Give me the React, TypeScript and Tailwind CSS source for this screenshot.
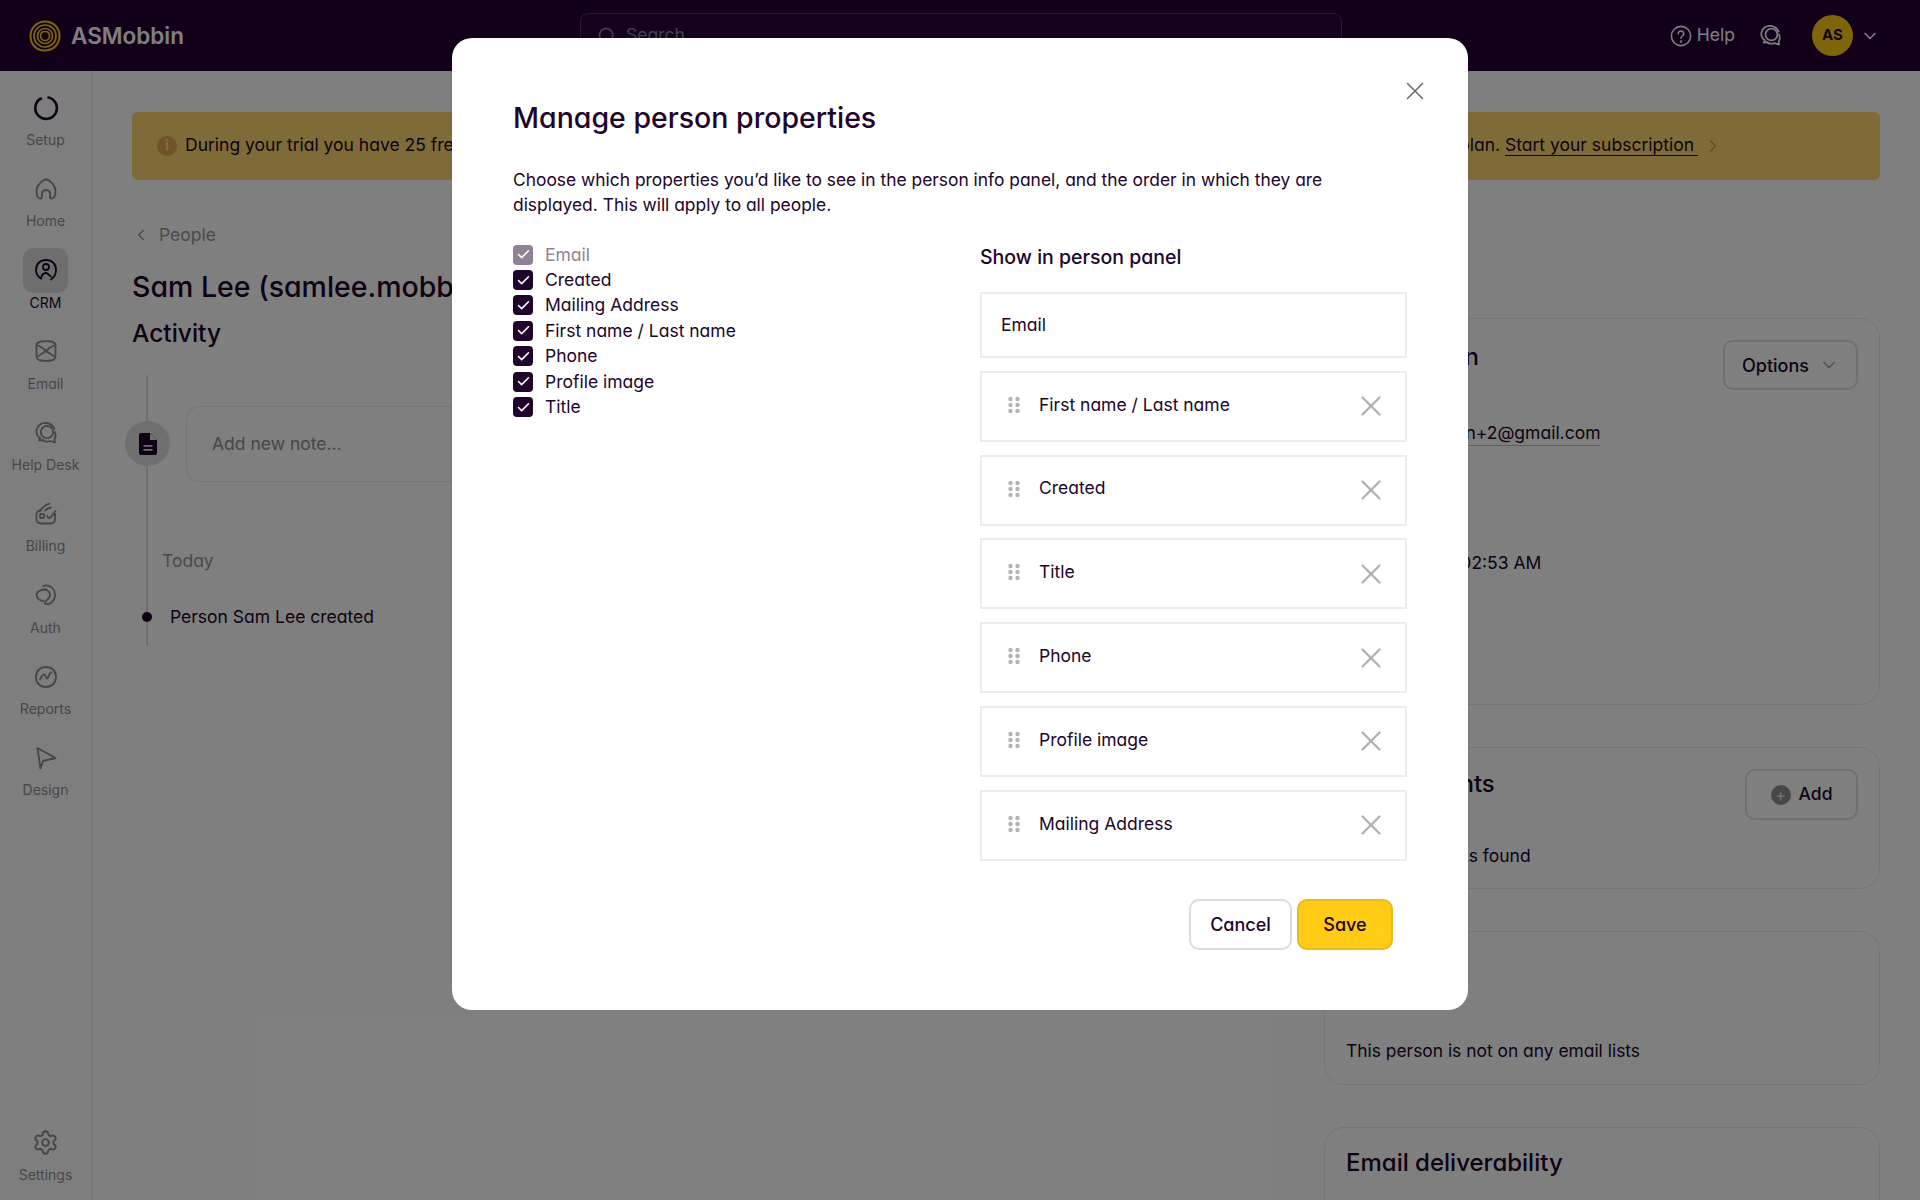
import React from "react";
import { Settings, ChevronDown, ChevronLeft, ChevronRight, X, Search, Check } from "lucide-react";

const S = ({ children, size = 24, className = "" }: { children: React.ReactNode; size?: number; className?: string }) => (
  <svg width={size} height={size} viewBox="0 0 24 24" fill="none" stroke="currentColor" strokeWidth={1.8} strokeLinecap="round" strokeLinejoin="round" className={className}>
    {children}
  </svg>
);

const Bubbles = ({ size = 24 }: { size?: number }) => (
  <S size={size}>
    <path d="M6 17C3 15 2 12 2.500 9 3.500 4 8 1.500 12.500 2c3.500.5 6.500 2.500 8 6" />
    <circle cx="13" cy="11" r="6.200" />
    <path d="M21 11c1 3 .5 6-.5 8l.5 2.500-5-1.500c-3 1-6 .5-8-1" />
    <path d="M6 17l-1 2.500 4-.5" />
  </S>
);

const icons: Record<string, React.ReactNode> = {
  Home: <S><path d="M12 2.500C9 2.500 2.500 8 2.500 14c0 5 1.500 7.500 4 7.500s1-3.500 1.500-5.500c.5-2 2-3 4-3s3.500 1 4 3c.5 2-1 5.500 1.500 5.500s4-2.500 4-7.500c0-6-6.500-11.500-9.500-11.500z" /></S>,
  CRM: <S><path d="M7 20.500C3.500 18.500 2 15.500 2 12 2 6 6 2 12 2s10 4 10 10c0 4-2 7.500-5 9.500" /><circle cx="12" cy="9" r="3" /><path d="M7 20.500c.5-3 2.500-5.500 5-5.500s3 3 5 3.500" /></S>,
  Email: <S><path d="M7 2.500c3-.5 7-.5 10 0 3 .5 4.500 2 4.500 4.500v10c0 3-1.500 4-4.500 4.500-3 .5-7 .5-10 0-3-.5-4.500-1.500-4.500-4.500V7c0-2.500 1.500-4 4.500-4.500z" /><path d="M4 6.500c3 1 5.500 3 8 5.500 2.500-2.500 5-4.500 8-5.500M4.500 17c2.500-2 5-3 7.500-5 2.500 2 5 3 7.500 5" /></S>,
  "Help Desk": <Bubbles />,
  Billing: <S><path d="M7 8.500c-3 0-4.500 1.500-4.500 4.500v4c0 3 2 4.500 5 4.500h9c3 0 4.500-1.500 4.500-4.500v-5" /><path d="M6.500 8c2-3 5-5 9-6.500M11 8.500c1.500-1.500 3.500-2.500 6-3" /><circle cx="8" cy="14" r="2.200" /><path d="M13 14c1 2.500 2.500 2.500 4 1 1.500-1.500 3-4 4.500-6" /></S>,
  Auth: <S><path d="M9 3c6-2 12 2 12 9 0 6-5 10-9 9-2-.5-1-3 1-4 2-1.500 3-3 3-5 0-3-3-5.500-5-5.500" /><path d="M11 6.500c-4 0-8.500 2-8.500 5.500 0 3 3.500 6 7 6" /></S>,
  Reports: <S><path d="M12 2c6 0 10 4 10 10s-4 10-10 10S2 18 2 12 6 2 12 2z" /><path d="M6 14.500c1.500-3 3-5.500 4.500-5 1.500.5 1 4 2.500 4 1.500 0 2-6 4.500-6" /></S>,
  Design: <S><path d="M3.500 2l18 10-12.500 3-2.500 7.500z" /></S>,
};

const NavItem = ({ label, active }: { label: string; active?: boolean }) => (
  <div className="flex flex-col items-center">
    <div className={`flex h-[45px] w-[45px] items-center justify-center rounded-[10px] ${active ? "bg-[#dedcdf] text-[#21042b]" : "text-[#8b8a8e]"}`}>
      {icons[label]}
    </div>
    <span className={`text-[14px] leading-[20px] ${active ? "text-[#21042b]" : "text-[#8f8e92]"}`}>{label}</span>
  </div>
);

const Logo = () => (
  <svg width="32" height="32" viewBox="0 0 32 32" fill="none" stroke="#ffcb14" strokeWidth="1.700">
    <path d="M16 1.500c8 0 14.500 6 14.500 14.500S24 30.500 15.500 30.500 1.500 24 1.500 16 8 1.500 16 1.500z" strokeWidth="2" />
    <path d="M16 5c6 0 11 4.500 11 11s-5 11-11 11S5 22 5 16 10 5 16 5z" />
    <path d="M16 8.500c4.500 0 7.500 3.500 7.500 7.500s-3 7.500-7.500 7.500S8.500 20 8.500 16 11.500 8.500 16 8.500z" />
    <path d="M16 11.500c3 0 4.500 2 4.500 4.500s-2 4.500-4.500 4.500-4.500-2-4.500-4.500 1.500-4.500 4.500-4.500z" />
  </svg>
);

const Card = ({ className, children }: { className: string; children?: React.ReactNode }) => (
  <div className={`rounded-[20px] border-[1.5px] border-[#ebebeb] px-[21px] ${className}`}>{children}</div>
);

const checks = ["Created", "Mailing Address", "First name / Last name", "Phone", "Profile image", "Title"];
const rows = ["First name / Last name", "Created", "Title", "Phone", "Profile image", "Mailing Address"];

const Dots = () => (
  <svg width="12" height="18" viewBox="0 0 12 18" fill="#b4b4b4" className="shrink-0">
    {[3, 9, 15].map((y) => (
      <React.Fragment key={y}>
        <circle cx="2.500" cy={y} r="2.200" />
        <circle cx="9.500" cy={y} r="2.200" />
      </React.Fragment>
    ))}
  </svg>
);

export default function App() {
  return (
    <div className="relative h-[1200px] w-[1920px] overflow-hidden bg-white font-['Inter','Liberation_Sans',sans-serif] text-[#21042b] [font-feature-settings:'cv11']">
      <header className="flex h-[71px] items-center bg-[#240034] pl-[29px] pr-[40px]">
        <Logo />
        <span className="ml-[10px] text-[22.500px] font-semibold text-white">ASMobbin</span>
        <div className="ml-[396px] flex h-[46px] w-[762px] items-center gap-[9px] rounded-[8px] border border-[#4a3453] bg-[#2b053c] pl-[16px] text-[#8f7f99]">
          <Search size={20} />
          <span className="text-[17.500px]">Search</span>
        </div>
        <div className="ml-auto flex items-center text-white">
          <svg width="22" height="22" viewBox="0 0 24 24" fill="none" stroke="currentColor" strokeWidth="1.700" strokeLinecap="round">
            <circle cx="12" cy="12" r="10.500" />
            <path d="M9 9.500c0-4 6-4 6 0 0 2.500-3 2.500-3 5" />
            <circle cx="12" cy="18" r=".5" />
          </svg>
          <span className="ml-[5px] text-[17.500px]">Help</span>
          <span className="ml-[24px]"><Bubbles size={23} /></span>
          <div className="ml-[30px] flex h-[41px] w-[41px] items-center justify-center rounded-full bg-[#ffcb14] text-[15px] font-bold text-[#21042b]">AS</div>
          <ChevronDown size={20} className="ml-[7px]" />
        </div>
      </header>

      <div className="flex h-[1129px]">
        <aside className="flex w-[93px] shrink-0 flex-col border-r-2 border-[#eeeeee] bg-[#fdfdfd] pb-[15px] pt-[14px]">
          <div className="flex flex-col gap-[16.300px]">
            <div className="flex flex-col items-center">
              <div className="flex h-[45px] w-[45px] items-center justify-center text-[#21042b]">
                <svg width="26" height="26" viewBox="0 0 26 26" fill="none" stroke="currentColor" strokeWidth="2.600" strokeLinecap="round">
                  <path d="M15.500 2.500A10.800 10.800 0 1 1 8 3.500" />
                </svg>
              </div>
              <span className="text-[14px] leading-[20px] text-[#8f8e92]">Setup</span>
            </div>
            <NavItem label="Home" />
            <NavItem label="CRM" active />
            <NavItem label="Email" />
            <NavItem label="Help Desk" />
            <NavItem label="Billing" />
            <NavItem label="Auth" />
            <NavItem label="Reports" />
            <NavItem label="Design" />
          </div>
          <div className="mt-auto flex flex-col items-center">
            <div className="flex h-[45px] items-center justify-center text-[#8b8a8e]"><Settings size={27} strokeWidth={1.700} /></div>
            <span className="text-[14px] leading-[20px] text-[#8f8e92]">Settings</span>
          </div>
        </aside>

        <main className="min-w-0 flex-1 pl-[39px] pr-[40px] pt-[41px]">
          <div className="flex h-[68px] items-center justify-between rounded-[6px] bg-[#ffd66f] pb-[1px] pl-[25px] pr-[157px] text-[17.500px]">
            <div className="flex w-[300px] items-center gap-[8px] whitespace-nowrap">
              <div className="flex h-[20px] w-[20px] shrink-0 items-center justify-center rounded-full bg-[#e0a84e] text-[13px] font-bold leading-none text-[#ffe2a0]">i</div>
              <span>During your trial you have 25 free</span>
            </div>
            <div className="flex items-center">
              <span>plan. <span className="border-b border-[#21042b] pr-[4px]">Start your subscription</span></span>
              <ChevronRight size={20} className="ml-[5px] text-[#c79a4c]" />
            </div>
          </div>

          <div className="mt-[43px] flex gap-[40px]">
            <div className="w-[1152px] shrink-0">
              <div className="flex items-center text-[17.500px] leading-[24px] text-[#959398]">
                <ChevronLeft size={18} />
                <span className="ml-[9px]">People</span>
              </div>
              <h1 className="mt-[20px] whitespace-nowrap text-[28.500px] font-medium leading-[40px]">Sam Lee (samlee.mobb</h1>
              <h2 className="mt-[8px] text-[24.500px] font-medium leading-[36px]">Activity</h2>
              <div className="relative ml-[14px] mt-[24px] h-[271px] border-l-2 border-[#dedede] pl-[38px] pt-[31px]">
                <div className="absolute -left-[23px] top-[46px] flex h-[45px] w-[45px] items-center justify-center rounded-full bg-[#dedede]">
                  <svg width="18" height="22" viewBox="0 0 18 22" fill="#21042b">
                    <path d="M2 0h9l7 7v13a2 2 0 0 1-2 2H2a2 2 0 0 1-2-2V2a2 2 0 0 1 2-2z" />
                    <path d="M11 0v7h7z" fill="#dedede" />
                    <path d="M4.500 12h9v1.800h-9zM4.500 16h9v1.800h-9z" fill="#dedede" />
                  </svg>
                </div>
                <div className="flex h-[76px] w-[282px] items-center rounded-l-[14px] border-[1.500px] border-r-0 border-[#ebebeb] pl-[25px] text-[17.500px] text-[#8f8e92]">Add new note...</div>
                <div className="-ml-[24px] mt-[67px] text-[17.500px] leading-[24px] text-[#959398]">Today</div>
                <div className="relative -ml-[16px] mt-[32px] text-[17.500px] leading-[24px]">
                  <span className="absolute -left-[28px] top-[7px] h-[10px] w-[10px] rounded-full bg-[#21042b]" />
                  Person Sam Lee created
                </div>
              </div>
            </div>

            <div className="w-[556px] shrink-0 pt-[95px]">
              <Card className="relative h-[387px]">
                <div className="mt-[22px] text-[24px] font-medium leading-[32px]">Information</div>
                <div className="absolute right-[21px] top-[21px] flex h-[50px] w-[135px] items-center justify-center gap-[10px] rounded-[10px] border-2 border-[#dedede] text-[18px] font-medium">
                  Options <ChevronDown size={20} className="text-[#a5a5a5]" />
                </div>
                <div className="ml-[3px] mt-[48px] w-fit border-b border-[#bdbdbd] text-[17.500px] leading-[24px]">samlee.mobbin+2@gmail.com</div>
                <div className="ml-[7px] mt-[105px] text-[17.500px] leading-[24px]">February 18, 02:53 AM</div>
              </Card>
              <Card className="relative mt-[42px] h-[142px]">
                <div className="ml-[3px] mt-[20px] text-[24px] font-medium leading-[32px]">Attachments</div>
                <div className="absolute right-[21px] top-[21px] flex h-[51px] w-[113px] items-center justify-center gap-[8px] rounded-[10px] border-2 border-[#dedede] text-[17.500px] font-medium">
                  <span className="flex h-[20px] w-[20px] items-center justify-center rounded-full bg-[#8f8e92] text-[16px] leading-none text-[#dedede]">+</span>
                  Add
                </div>
                <div className="mt-[44px] text-[17.500px] leading-[24px]">No attachments found</div>
              </Card>
              <Card className="mt-[42px] h-[154px]">
                <div className="mt-[20px] text-[24px] font-medium leading-[32px]">Email lists</div>
                <div className="mt-[55px] text-[17.400px] leading-[24px]">This person is not on any email lists</div>
              </Card>
              <Card className="mt-[42px] h-[120px]">
                <div className="mt-[19px] text-[24px] font-medium leading-[32px]">Email deliverability</div>
              </Card>
            </div>
          </div>
        </main>
      </div>

      <div className="absolute inset-0 bg-black/50" />

      <div className="absolute left-[452px] top-[38px] h-[972px] w-[1016px] rounded-[20px] bg-white px-[61px] pb-[60px] pt-[62px]">
        <X size={30} strokeWidth={1.300} className="absolute right-[38px] top-[38px] text-[#6f6a73]" />
        <h2 className="text-[28.500px] font-medium leading-[36px]">Manage person properties</h2>
        <p className="mt-[31px] text-[17.400px] leading-[25px]">
          Choose which properties you’d like to see in the person info panel, and the order in which they are
          <br />
          displayed. This will apply to all people.
        </p>
        <div className="mt-[25px] flex">
          <div className="w-[467px] shrink-0">
            <label className="flex h-[25.400px] items-center gap-[12px] text-[17.500px] text-[#908397]">
              <span className="flex h-[20px] w-[20px] items-center justify-center rounded-[4px] bg-[#908197] text-white"><Check size={15} strokeWidth={2.500} /></span>
              Email
            </label>
            {checks.map((c) => (
              <label key={c} className="flex h-[25.400px] items-center gap-[12px] text-[17.500px]">
                <span className="flex h-[20px] w-[20px] items-center justify-center rounded-[4px] bg-[#21042b] text-white"><Check size={15} strokeWidth={2.500} /></span>
                {c}
              </label>
            ))}
          </div>
          <div className="min-w-0 flex-1 pt-[2px]">
            <h3 className="text-[19.500px] font-medium leading-[27px]">Show in person panel</h3>
            <div className="mt-[21px] flex h-[66px] items-center border-2 border-[#ececec] pl-[19px] text-[17.500px]">Email</div>
            <div className="mt-[12.800px] flex flex-col gap-[12.800px]">
              {rows.map((r) => (
                <div key={r} className="flex h-[71px] items-center border-2 border-[#ececec] pl-[26px] pr-[17px] text-[17.500px]">
                  <span className="-mt-[3px]"><Dots /></span>
                  <span className="-mt-[3px] ml-[19px]">{r}</span>
                  <X size={34} strokeWidth={1.600} className="ml-auto text-[#b0b0b0]" />
                </div>
              ))}
            </div>
            <div className="mr-[14px] mt-[38px] flex justify-end gap-[5px]">
              <button className="h-[51px] w-[103px] rounded-[10px] border-2 border-[#dcdcdc] bg-white text-[18px] font-medium">Cancel</button>
              <button className="h-[51px] w-[96px] rounded-[10px] border-2 border-[#e8b920] bg-[#ffcb14] text-[18px] font-medium">Save</button>
            </div>
          </div>
        </div>
      </div>
    </div>
  );
}
